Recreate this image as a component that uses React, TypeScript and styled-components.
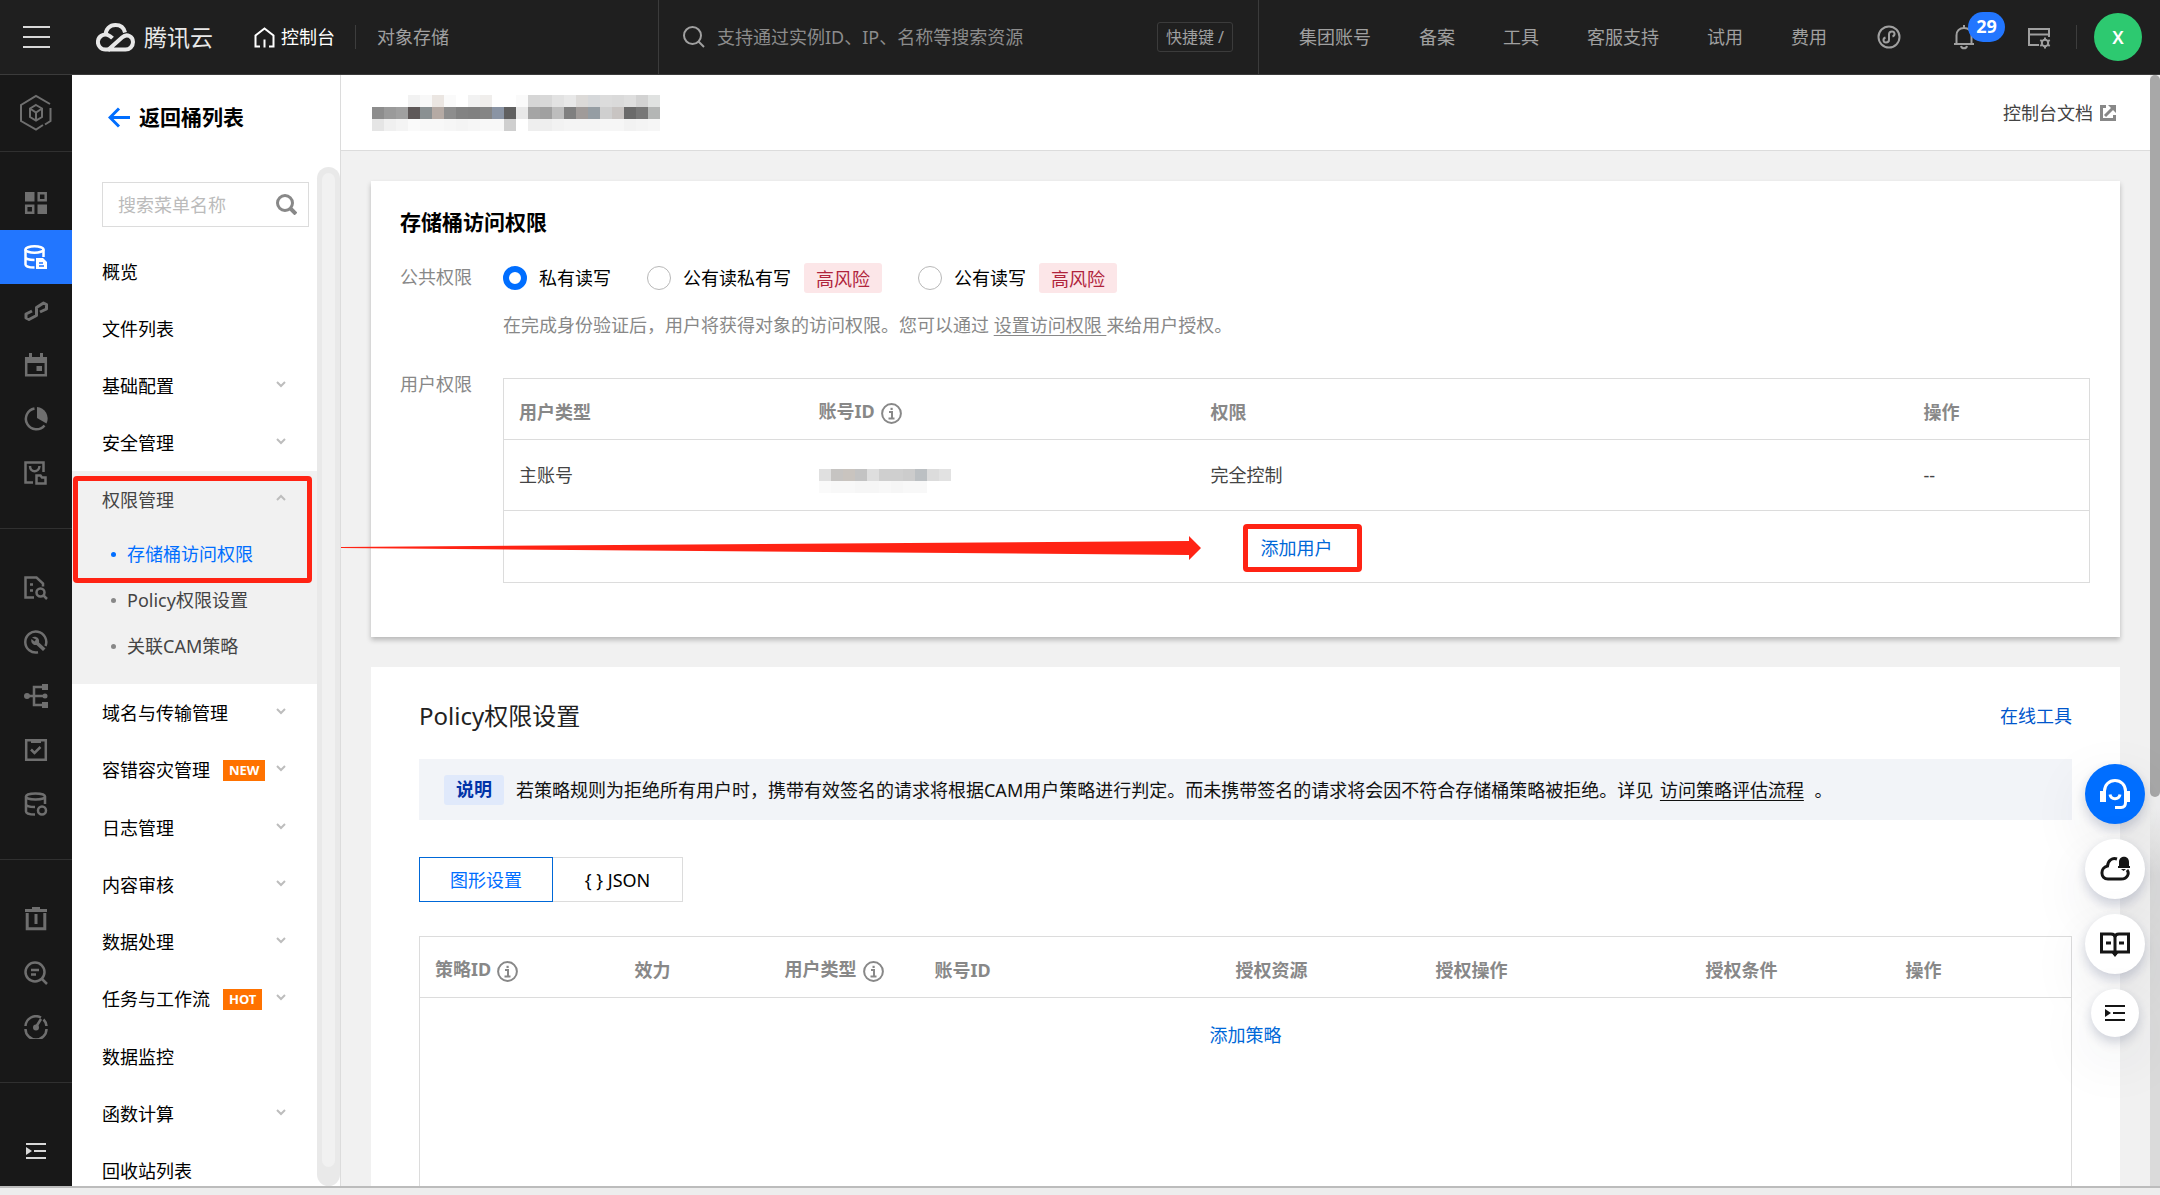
import React from "react";
import styled, { createGlobalStyle, css } from "styled-components";

const GlobalStyle = createGlobalStyle`
  * { box-sizing: border-box; }
  html, body { margin: 0; padding: 0; }
  body {
    font-family: "Noto Sans", "Noto Sans CJK SC", sans-serif;
    font-size: 18px;
    line-height: 28px;
    color: #000;
    background: #f1f1f1;
    overflow: hidden;
  }
  button, input { font: inherit; color: inherit; }
  button { border: 0; padding: 0; background: none; cursor: pointer; }
  a { color: inherit; text-decoration: none; }
  ul { list-style: none; margin: 0; padding: 0; }
  h1, h2, p { margin: 0; }
  svg { display: block; flex: none; }
`;

const Page = styled.div`
  display: flex;
  flex-direction: column;
  height: 100vh;
`;

/* ---------- top bar ---------- */
const TopBar = styled.header`
  display: flex;
  flex: none;
  height: 75px;
  background: #1f1f1f;
  border-bottom: 1px solid #3b3b3b;
  color: #a0a0a0;
`;

const TopLeft = styled.div`
  display: flex;
  align-items: center;
  flex: none;
  width: 658px;
  padding-left: 23px;
`;

const Brand = styled.a`
  display: flex;
  align-items: center;
  gap: 9px;
  margin: 0 41px 0 46px;
  font-size: 23px;
  color: #e8e8e8;
`;

const ConsoleLink = styled.a`
  display: flex;
  align-items: center;
  gap: 6px;
  color: #fff;
`;

const Divider = styled.span<{ $before: number; $after: number }>`
  width: 1px;
  height: 24px;
  margin: 0 ${(p) => p.$after}px 0 ${(p) => p.$before}px;
  background: #3d3d3d;
`;

const SearchBar = styled.div`
  display: flex;
  align-items: center;
  flex: none;
  width: 601px;
  padding: 0 25px 0 24px;
  gap: 12px;
  border: solid #3b3b3b;
  border-width: 0 1px;
`;

const SearchInput = styled.input`
  flex: 1;
  min-width: 0;
  border: 0;
  outline: 0;
  padding: 0;
  background: transparent;
  &::placeholder { color: #8c8c8c; opacity: 1; }
`;

const Shortcut = styled.kbd`
  height: 30px;
  padding: 0 8px;
  border: 1px solid #3b3b3b;
  border-radius: 3px;
  font-family: inherit;
  font-size: 16px;
`;

const TopNav = styled.nav`
  display: flex;
  flex: 1;
  align-items: center;
  justify-content: flex-end;
  gap: 48px;
  padding-right: 18px;
`;

const NavTools = styled.div`
  display: flex;
  align-items: center;
  margin-left: 2px;
`;

const BellButton = styled.button`
  position: relative;
  margin: 0 52px;
`;

const Badge = styled.span`
  position: absolute;
  left: 15px;
  bottom: 8px;
  width: 37px;
  height: 30px;
  border-radius: 15px;
  background: #2276ff;
  color: #fff;
  font-size: 18px;
  font-weight: 700;
  text-align: center;
`;

const Avatar = styled.button`
  width: 48px;
  height: 48px;
  border-radius: 50%;
  background: #2dc970;
  color: #fff;
  font-weight: 600;
`;

/* ---------- frame ---------- */
const Frame = styled.div`
  display: flex;
  flex: 1;
  min-height: 0;
`;

const BottomEdge = styled.div`
  flex: none;
  height: 9px;
  border-top: 2px solid #bcbcbc;
  background: #ededed;
`;

/* ---------- icon rail ---------- */
const Rail = styled.nav`
  display: flex;
  flex-direction: column;
  flex: none;
  width: 72px;
  background: #181818;
  color: #6f6f6f;
`;

const RailLogo = styled.button`
  display: grid;
  place-items: center;
  height: 77px;
  padding-bottom: 1px;
  margin-bottom: 24px;
  border-bottom: 1px solid #303030;
  color: inherit;
`;

const RailGroup = styled.div`
  display: flex;
  flex-direction: column;
  padding-bottom: 28px;
  margin-bottom: 32px;
  border-bottom: 1px solid #303030;
  &:nth-last-child(2) { margin-bottom: 0; }
`;

const RailButton = styled.button<{ $active?: boolean }>`
  display: grid;
  place-items: center;
  height: 54px;
  color: ${(p) => (p.$active ? "#fff" : "inherit")};
  background: ${(p) => (p.$active ? "#2276ff" : "transparent")};
`;

const RailToggle = styled.button`
  display: grid;
  place-items: center;
  height: 70px;
  margin-top: auto;
  color: #d8d8d8;
`;

/* ---------- sidebar ---------- */
const Sidebar = styled.aside`
  display: flex;
  flex-direction: column;
  flex: none;
  width: 269px;
  background: #fff;
  border-right: 1px solid #dcdcdc;
`;

const BackLink = styled.a`
  display: flex;
  align-items: center;
  gap: 9px;
  flex: none;
  height: 84px;
  margin-bottom: 8px;
  padding-left: 36px;
  font-size: 21px;
  font-weight: 700;
`;

const SideBody = styled.div`
  display: flex;
  flex: 1;
  min-height: 0;
`;

const MenuColumn = styled.div`
  flex: 1;
  min-width: 0;
  padding-top: 15px;
  overflow: hidden;
`;

const MenuSearch = styled.label`
  display: flex;
  align-items: center;
  height: 45px;
  margin: 0 8px 16px 30px;
  padding: 0 11px 0 15px;
  border: 1px solid #dcdcdc;
  color: #888;
  input {
    flex: 1;
    min-width: 0;
    border: 0;
    outline: 0;
    padding: 0;
    background: transparent;
  }
  input::placeholder { color: #bbb; opacity: 1; }
`;

const MenuRow = styled.button<{ $tagged?: boolean; $open?: boolean }>`
  display: flex;
  align-items: center;
  width: 100%;
  height: ${(p) => (p.$tagged ? 58 : 57)}px;
  padding: 0 31px 0 30px;
  color: ${(p) => (p.$open ? "#444" : "#000")};
  text-align: left;
  svg { margin-left: auto; }
`;

const MenuTag = styled.span`
  height: 21px;
  margin-left: 13px;
  padding: 0 6px;
  background: #ff7200;
  color: #fff;
  font-size: 13px;
  line-height: 21px;
  font-weight: 700;
`;

const OpenGroup = styled.div`
  position: relative;
  padding-bottom: 15px;
  background: #f1f1f1;
`;

const SubList = styled.ul`
  padding-top: 3px;
`;

const SubLink = styled.a<{ $active?: boolean }>`
  display: flex;
  align-items: center;
  gap: 11px;
  height: 46px;
  padding-left: 39px;
  color: ${(p) => (p.$active ? "#006eff" : "#444")};
  &::before {
    content: "";
    width: 5px;
    height: 5px;
    border-radius: 50%;
    background: ${(p) => (p.$active ? "#006eff" : "#888")};
  }
`;

const SideTrack = styled.div`
  flex: none;
  width: 23px;
  padding: 6px 5px 19px;
  border-radius: 12px;
  background: #e9e9e9;
`;

const SideThumb = styled.div`
  height: 100%;
  border-radius: 7px;
  background: #f1f1f1;
`;

const markBox = css`
  content: "";
  position: absolute;
  border: 5px solid #ff2314;
  border-radius: 4px;
  pointer-events: none;
`;

const GroupMark = styled.span`
  ${markBox}
  inset: 5px 5px auto 1px;
  height: 107px;
`;

/* ---------- main ---------- */
const Main = styled.main`
  flex: 1;
  min-width: 0;
  overflow: hidden;
`;

const MainHead = styled.div`
  display: flex;
  align-items: center;
  justify-content: space-between;
  height: 76px;
  padding: 0 34px 0 31px;
  background: #fff;
  border-bottom: 1px solid #dcdcdc;
`;

const DocLink = styled.a`
  display: flex;
  align-items: center;
  gap: 7px;
  color: #444;
  svg { color: #888; }
`;

const Cards = styled.div`
  display: flex;
  flex-direction: column;
  gap: 30px;
  padding: 30px;
`;

const AccessCard = styled.section`
  padding: 27px 30px 54px 29px;
  background: #fff;
  box-shadow: 0 3px 5px rgba(0, 0, 0, 0.24);
`;

const CardTitle = styled.h1`
  margin-bottom: 27px;
  font-size: 21px;
  line-height: 28px;
  font-weight: 700;
`;

const Field = styled.div`
  display: flex;
  & + & { margin-top: 31px; }
`;

const FieldLabel = styled.div`
  flex: none;
  width: 103px;
  color: #888;
`;

const FieldBody = styled.div`
  flex: 1;
  min-width: 0;
`;

const RadioRow = styled.div`
  display: flex;
  align-items: center;
  gap: 36px;
  height: 30px;
  margin-bottom: 18px;
`;

const RadioOption = styled.label`
  display: flex;
  align-items: center;
  gap: 12px;
`;

const Radio = styled.input`
  appearance: none;
  width: 24px;
  height: 24px;
  margin: 0;
  border: 1px solid #b8b8b8;
  border-radius: 50%;
  background: #fff;
  &:checked { border: 6px solid #006eff; }
`;

const RiskTag = styled.span`
  height: 30px;
  margin-left: 1px;
  padding: 2px 12px 0;
  border-radius: 3px;
  background: #fce6e8;
  color: #b0243c;
`;

const Hint = styled.p`
  color: #888;
  a { text-decoration: underline; text-underline-offset: 3px; }
`;

const Table = styled.table`
  width: 100%;
  table-layout: fixed;
  border-collapse: collapse;
  border: 1px solid #dcdcdc;
  tr { border-bottom: 1px solid #dcdcdc; }
  th, td { padding: 0 15px; text-align: left; }
  th {
    height: 61px;
    padding-top: 6px;
    line-height: 20px;
    font-weight: 700;
    color: #888;
  }
  td { height: 71px; color: #444; }
`;

const AccessTable = styled(Table)`
  margin-top: 8px;
`;

const Col = styled.col<{ $w?: number }>`
  width: ${(p) => (p.$w ? `${p.$w}px` : "auto")};
`;

const HeadIcon = styled.svg`
  display: inline-block;
  margin-left: 6px;
  vertical-align: -6px;
`;

const AddCell = styled.td<{ $tall?: boolean }>`
  && {
    height: ${(p) => (p.$tall ? 300 : 72)}px;
    padding-top: ${(p) => (p.$tall ? 23 : 2)}px;
    vertical-align: ${(p) => (p.$tall ? "top" : "middle")};
    text-align: center;
    color: #0068d8;
  }
`;

const AddUser = styled.span`
  position: relative;
  display: inline-block;
  &::after {
    ${markBox}
    inset: -10px -29px -10px -18px;
  }
`;

const Arrow = styled.svg`
  position: absolute;
  right: calc(100% + 60px);
  top: 2px;
`;

const PolicyCard = styled.section`
  padding: 33px 48px 48px;
  background: #fff;
`;

const PolicyHead = styled.div`
  display: flex;
  align-items: center;
  justify-content: space-between;
  margin-bottom: 27px;
  a { color: #0056cc; }
`;

const PolicyTitle = styled.h2`
  font-size: 24px;
  line-height: 32px;
  font-weight: 400;
  color: #222;
`;

const Notice = styled.div`
  display: flex;
  align-items: center;
  gap: 12px;
  height: 61px;
  margin-bottom: 37px;
  padding-left: 25px;
  background: #f2f4f8;
  color: #111;
  a { text-decoration: underline; text-underline-offset: 3px; margin: 0 6px 0 2px; }
`;

const NoticeTag = styled.strong`
  flex: none;
  height: 30px;
  padding: 0 12px;
  border-radius: 3px;
  background: #e0e9fb;
  color: #0033a8;
`;

const Segments = styled.div`
  display: flex;
  margin-bottom: 34px;
`;

const Segment = styled.button<{ $active?: boolean }>`
  min-width: 130px;
  height: 45px;
  padding: 0 30px;
  border: 1px solid ${(p) => (p.$active ? "#0068d8" : "#dcdcdc")};
  border-left-width: ${(p) => (p.$active ? 1 : 0)}px;
  color: ${(p) => (p.$active ? "#006eff" : "#000")};
`;

/* ---------- page scrollbar and floating tools ---------- */
const PageTrack = styled.div`
  flex: none;
  width: 10px;
  background: linear-gradient(#f0f0f0 66%, #dadada 72%);
`;

const PageThumb = styled.div`
  height: 65%;
  border-radius: 5px;
  background: #a8a8a8;
`;

const FloatTools = styled.div`
  position: fixed;
  right: 15px;
  bottom: 158px;
  display: flex;
  flex-direction: column;
  align-items: center;
  gap: 15px;
`;

const FloatButton = styled.button<{ $primary?: boolean; $small?: boolean }>`
  display: grid;
  place-items: center;
  width: ${(p) => (p.$small ? 48 : 60)}px;
  height: ${(p) => (p.$small ? 48 : 60)}px;
  border-radius: 50%;
  background: ${(p) => (p.$primary ? "#006eff" : "#fff")};
  color: ${(p) => (p.$primary ? "#fff" : "#151515")};
  box-shadow: 0 5px 12px rgba(30, 45, 90, 0.2), 0 20px 60px rgba(30, 45, 70, 0.1);
`;

/* ---------- icons ---------- */
type IconProps = { w?: number; h?: number; sw?: number; children: React.ReactNode };

const Icon = ({ w = 24, h = 24, sw = 2.5, children }: IconProps) => (
  <svg
    width={w}
    height={h}
    viewBox={`0 0 ${w} ${h}`}
    fill="none"
    stroke="currentColor"
    strokeWidth={sw}
    aria-hidden="true"
  >
    {children}
  </svg>
);

const solid = { fill: "currentColor", stroke: "none" };

const CollapseIcon = () => (
  <Icon w={20} h={18} sw={2}>
    <path d="M0 2h20M8 9h12M0 16h20" />
    <path d="M0 5l6 4-6 4z" {...solid} />
  </Icon>
);

const InfoIcon = () => (
  <HeadIcon width="21" height="21" viewBox="0 0 21 21" fill="none" stroke="#888" strokeWidth="2" aria-hidden="true">
    <circle cx="10.500" cy="10.500" r="9.400" />
    <path d="M8 9h3v6M7.500 15.500h6" />
    <path d="M9.500 4.800h2.200v2.200h-2.200z" fill="#888" stroke="none" />
  </HeadIcon>
);

const Chevron = ({ up }: { up?: boolean }) => (
  <Icon w={10} h={12} sw={2}>
    <path d={up ? "M1 6l4-4 4 4" : "M1 2l4 4 4-4"} stroke="#bdbdbd" />
  </Icon>
);

const railGroups: { name: string; art: React.ReactNode }[][] = [
  [
    {
      name: "总览",
      art: (
        <>
          <path d="M1 1h9.500v9.500H1zM13.500 13.500H23V23h-9.500z" {...solid} />
          <path d="M14.700 2.200h7v7h-7zM2.200 14.700h7v7h-7z" />
        </>
      ),
    },
    {
      name: "对象存储",
      art: (
        <>
          <ellipse cx="10.500" cy="4.500" rx="9" ry="3.200" />
          <path d="M1.500 4.500v15c0 1.500 3 3 9 3M19.500 4.500V12M1.500 12c0 1.700 3.500 3 9 3" />
          <path d="M12 13h7l4 4v7H12z" {...solid} />
          <path d="M15 18h4M15 21h5" stroke="#2276ff" strokeWidth="1.500" />
        </>
      ),
    },
    { name: "数据流", art: <path d="M8 12L2 15v4l3 1.500 7.500-4v-8l7-4.500 3 1.500v4.500L16 13" strokeWidth="3" strokeLinejoin="round" /> },
    {
      name: "日程",
      art: (
        <>
          <path d="M2.200 5.200h19.600v17H2.200z" />
          <path d="M1 4h22v6H1zM5 0h3v5H5zM16 0h3v5h-3zM12.500 13H18v5h-5.500z" {...solid} />
        </>
      ),
    },
    {
      name: "统计",
      art: (
        <>
          <path d="M10.500 1.500A10.500 10.500 0 1 0 20.500 18.500" />
          <path d="M13 0a11.500 11.500 0 0 1 9.500 16.500L13 11z" {...solid} />
        </>
      ),
    },
    {
      name: "归档",
      art: (
        <>
          <path d="M9 21.500H1.500v-20h18V11M6 5c0 7 9 7 9.500 0" />
          <path d="M12.500 14.500h4l1.500 2h3.500v6h-9z" />
        </>
      ),
    },
  ],
  [
    {
      name: "日志检索",
      art: (
        <>
          <path d="M10 21.500H1.500v-20h11l6.500 6v3" />
          <circle cx="16.500" cy="16.500" r="4" />
          <path d="M19.500 19.500l3.500 3.500M6 8.500h3M6 14.500h3" />
        </>
      ),
    },
    {
      name: "工具",
      art: (
        <>
          <path d="M14 22.300A10.500 10.500 0 1 1 21.500 16" />
          <path d="M8 7.500c3-2 8 0 7 5l6.500 6-2.500 2.500-6.500-6c-4 .5-6-3-5-6l3 2.500 1.500-2z" {...solid} />
        </>
      ),
    },
    {
      name: "拓扑",
      art: (
        <>
          <path d="M2 12h18M18 3h-8v18h8" />
          <path d="M18 0h6v6h-6zM18 18h6v6h-6z" {...solid} />
          <circle cx="3" cy="12" r="3" {...solid} />
          <circle cx="21" cy="12" r="2.500" {...solid} />
        </>
      ),
    },
    {
      name: "任务",
      art: (
        <>
          <path d="M2.200 2.200h19.600v19.600H2.200zM7 11.500l3.500 3.500 6-6" />
          <path d="M7 1h10v4H7z" {...solid} />
        </>
      ),
    },
    {
      name: "数据库",
      art: (
        <>
          <ellipse cx="11.500" cy="4.500" rx="9.500" ry="3" />
          <path d="M2 4.500v15c0 1.500 3 3 9 3M21 4.500V12M2 12c0 1.700 3 3 9 3" />
          <circle cx="18" cy="18.500" r="4" />
        </>
      ),
    },
  ],
  [
    { name: "回收站", art: <path d="M1 3.500h22M8 1.500h8M3.200 6v15.700h17.600V6M12 7v10" strokeWidth="3" /> },
    {
      name: "检索",
      art: (
        <>
          <circle cx="11" cy="11" r="9.500" />
          <path d="M18 18l5 5M7 9h8M7 13.500h5" />
        </>
      ),
    },
    {
      name: "性能",
      art: (
        <>
          <path d="M17 2.500A10.500 10.500 0 0 0 1.500 11M1.500 14a10.500 10.500 0 0 0 21 0M22.500 11a10 10 0 0 0-3-6.500M12 12l5-8" />
          <circle cx="12" cy="12.500" r="3" {...solid} />
        </>
      ),
    },
  ],
];

/* ---------- blurred-out values ---------- */
const titleTiles = [
  "|||#f2f2f2|#f8f8f8|#ebe6e2|#fafafa||#f2f2f2|#f0eeec|||#fafafa|#d6d6d6|#d8d8d8|#e2e2e2|#e8e8e8|#dcdad8|#d6d8da|#dcdcdc|#dadada|#dedede|#d2d2d2|#e0e2e1",
  "#8d8d8d|#9a9a9a|#a0a0a0|#5e5858|#8a9092|#b5aaa4|#8d8d8d|#828282|#808080|#858585|#8a94a4|#606060|#e8e8e8|#a5a5a5|#a0a0a0|#bdbdbd|#7f7f7f|#a09b99|#959da3|#cfcfcf|#c8c4c2|#6a6a6a|#777777|#b4b6b5",
  "#e5e5e5|#f0f0f0|#f4f4f4|#fafafa|#f8f8f8|#f8f8f8|#f6f6f6|#f4f4f4|#f6f6f6|#f8f8f8|#f8f8f8|#cfcfcf||#eeeeee|#eeeeee|#f2f2f2|#f4f4f4|#f4f4f4|#f4f4f4|#f6f6f6|#f6f6f6|#f2f2f2|#f4f4f4|#f6f6f6",
];
const idTiles = [
  "||||||||||",
  "#e0e0e0|#c6c4c2|#c9c4bf|#c3c3c3|#dedede|#cfcfcf|#cfcfcf|#cccccc|#bcc0c3|#dcdcdc|#e2e2e2",
  "#fafafa|#f8f8f8|#f8f8f8|#f6f6f6|#f6f6f6|#f8f8f8|#f6f6f6|#f8f8f8|#f8f8f8||",
];

const Mosaic = ({ rows, label }: { rows: string[]; label: string }) => {
  const cells = rows.map((r) => r.split("|"));
  return (
    <svg width={cells[0].length * 12} height={rows.length * 12} role="img" aria-label={label} shapeRendering="crispEdges">
      {cells.map((row, y) =>
        row.map((c, x) => (c ? <rect key={`${x}-${y}`} x={x * 12} y={y * 12} width="12" height="12" fill={c} /> : null)),
      )}
    </svg>
  );
};

/* ---------- data ---------- */
type MenuItem = { label: string; tag?: string; leaf?: boolean };

const menuTop: MenuItem[] = [
  { label: "概览", leaf: true },
  { label: "文件列表", leaf: true },
  { label: "基础配置" },
  { label: "安全管理" },
];
const menuSub = ["存储桶访问权限", "Policy权限设置", "关联CAM策略"];
const menuBottom: MenuItem[] = [
  { label: "域名与传输管理" },
  { label: "容错容灾管理", tag: "NEW" },
  { label: "日志管理" },
  { label: "内容审核" },
  { label: "数据处理" },
  { label: "任务与工作流", tag: "HOT" },
  { label: "数据监控", leaf: true },
  { label: "函数计算" },
  { label: "回收站列表", leaf: true },
];
const navLinks = ["集团账号", "备案", "工具", "客服支持", "试用", "费用"];
const radios = [
  { label: "私有读写", risk: false },
  { label: "公有读私有写", risk: true },
  { label: "公有读写", risk: true },
];
const policyCols: { label: string; w?: number; info?: boolean }[] = [
  { label: "策略ID", w: 200, info: true },
  { label: "效力", w: 150 },
  { label: "用户类型", w: 150, info: true },
  { label: "账号ID" },
  { label: "授权资源", w: 200 },
  { label: "授权操作", w: 270 },
  { label: "授权条件", w: 200 },
  { label: "操作", w: 181 },
];

const MenuItems = ({ items }: { items: MenuItem[] }) => (
  <>
    {items.map((m) => (
      <MenuRow key={m.label} $tagged={!!m.tag}>
        {m.label}
        {m.tag && <MenuTag>{m.tag}</MenuTag>}
        {!m.leaf && <Chevron />}
      </MenuRow>
    ))}
  </>
);

const Top = () => (
  <TopBar>
    <TopLeft>
      <button aria-label="菜单">
        <Icon w={27} h={22} sw={2}>
          <path d="M0 1h27M0 11h27M0 21h27" stroke="#d8d8d8" />
        </Icon>
      </button>
      <Brand href="#">
        <Icon w={39} h={29} sw={4}>
          <path d="M14 26.500H9.500a7.500 7.500 0 1 1 2-14.700c1.800.6 3.300 1.700 5 3.400" />
          <path d="M10 12.500C9 6 14 2 19.500 2c5 0 8.500 3 9.500 7.500" />
          <path d="M12 27L26 14.500c5-4.500 11-1 11 4.500 0 4.500-3.500 7.500-7.500 7.500H12.500" />
        </Icon>
        腾讯云
      </Brand>
      <ConsoleLink href="#">
        <Icon w={21} h={21} sw={2}>
          <path d="M6 19.500H1.500V8.500l9-7 9 7v11H15M10.500 12.500v8" />
        </Icon>
        控制台
      </ConsoleLink>
      <Divider $before={20} $after={21} />
      <a href="#">对象存储</a>
    </TopLeft>
    <SearchBar>
      <Icon w={22} h={22} sw={2}>
        <circle cx="9.500" cy="9.500" r="8.500" />
        <path d="M15.500 15.500l5.500 5.500" />
      </Icon>
      <SearchInput aria-label="搜索资源" placeholder="支持通过实例ID、IP、名称等搜索资源" />
      <Shortcut>快捷键 /</Shortcut>
    </SearchBar>
    <TopNav>
      {navLinks.map((n) => (
        <a href="#" key={n}>
          {n}
        </a>
      ))}
      <NavTools>
        <button aria-label="小程序">
          <Icon sw={2}>
            <circle cx="12" cy="12" r="10.500" />
            <path d="M8.500 12.500c-3 1-2.500 5 .5 5 1.500 0 3-1 3-2.800V9.300c0-1.800 1.500-2.800 3-2.800 3 0 3.500 4 .5 5" />
          </Icon>
        </button>
        <BellButton aria-label="消息">
          <Icon w={22} h={26} sw={2}>
            <path d="M11 1v3M1 20h20M3.500 20v-8.500C3.500 7 6.500 4 11 4s7.500 3 7.500 7.500V20M8 22c.5 3 5.500 3 6 0" />
          </Icon>
          <Badge>29</Badge>
        </BellButton>
        <button aria-label="设置">
          <Icon w={24} h={24} sw={2}>
            <path d="M12 20H2V4h20v8M2 9.500h20" />
            <circle cx="18" cy="18" r="3.200" />
            <path d="M18 12.500v2M18 21.500v2M13.200 15.200l1.800 1M21 19.800l1.800 1M13.200 20.800l1.800-1M21 16.200l1.800-1" />
          </Icon>
        </button>
        <Divider $before={25} $after={17} />
        <Avatar>X</Avatar>
      </NavTools>
    </TopNav>
  </TopBar>
);

const IconRail = () => (
  <Rail>
    <RailLogo aria-label="产品">
      <Icon w={34} h={38} sw={2}>
        <path d="M24 31l-7 4.500L2 27V11L17 2l14 8M31.500 14v13L26 30.500M17 11l6 3.500v8.500l-6 3.500-6-3.500v-8.500zM11 14.500l6 4 6-4M17 18.500v8" />
      </Icon>
    </RailLogo>
    {railGroups.map((g, i) => (
      <RailGroup key={i}>
        {g.map((it) => (
          <RailButton key={it.name} aria-label={it.name} $active={it.name === "对象存储"}>
            <Icon>{it.art}</Icon>
          </RailButton>
        ))}
      </RailGroup>
    ))}
    <RailToggle aria-label="展开">
      <CollapseIcon />
    </RailToggle>
  </Rail>
);

const SideMenu = () => (
  <Sidebar>
    <BackLink href="#">
      <Icon w={22} h={21} sw={3}>
        <path d="M22 10.500H3M11 1.500l-9 9 9 9" stroke="#006eff" />
      </Icon>
      返回桶列表
    </BackLink>
    <SideBody>
      <MenuColumn>
        <MenuSearch>
          <input aria-label="搜索菜单" placeholder="搜索菜单名称" />
          <Icon w={21} h={21} sw={3}>
            <circle cx="9" cy="9" r="7.500" />
            <path d="M14 14l6 6" strokeWidth="4" />
          </Icon>
        </MenuSearch>
        <MenuItems items={menuTop} />
        <OpenGroup>
          <MenuRow $open>
            权限管理
            <Chevron up />
          </MenuRow>
          <SubList>
            {menuSub.map((s, i) => (
              <li key={s}>
                <SubLink href="#" $active={i === 0}>
                  {s}
                </SubLink>
              </li>
            ))}
          </SubList>
          <GroupMark />
        </OpenGroup>
        <MenuItems items={menuBottom} />
      </MenuColumn>
      <SideTrack>
        <SideThumb />
      </SideTrack>
    </SideBody>
  </Sidebar>
);

const Access = () => (
  <AccessCard>
    <CardTitle>存储桶访问权限</CardTitle>
    <Field>
      <FieldLabel>公共权限</FieldLabel>
      <FieldBody>
        <RadioRow role="radiogroup" aria-label="公共权限">
          {radios.map((r, i) => (
            <RadioOption key={r.label}>
              <Radio type="radio" name="acl" defaultChecked={i === 0} />
              {r.label}
              {r.risk && <RiskTag>高风险</RiskTag>}
            </RadioOption>
          ))}
        </RadioRow>
        <Hint>
          在完成身份验证后，用户将获得对象的访问权限。您可以通过 <a href="#">设置访问权限 </a>来给用户授权。
        </Hint>
      </FieldBody>
    </Field>
    <Field>
      <FieldLabel>用户权限</FieldLabel>
      <FieldBody>
        <AccessTable>
          <colgroup>
            <Col $w={300} />
            <Col $w={392} />
            <Col />
            <Col $w={181} />
          </colgroup>
          <thead>
            <tr>
              <th>用户类型</th>
              <th>
                账号ID
                <InfoIcon />
              </th>
              <th>权限</th>
              <th>操作</th>
            </tr>
          </thead>
          <tbody>
            <tr>
              <td>主账号</td>
              <td>
                <Mosaic rows={idTiles} label="账号" />
              </td>
              <td>完全控制</td>
              <td>--</td>
            </tr>
            <tr>
              <AddCell colSpan={4}>
                <AddUser>
                  <a href="#">添加用户</a>
                  <Arrow width="860" height="24" viewBox="0 0 860 24" aria-hidden="true">
                    <path d="M0 11L848 5V0l12 12-12 12v-5L0 12z" fill="#ff2314" />
                  </Arrow>
                </AddUser>
              </AddCell>
            </tr>
          </tbody>
        </AccessTable>
      </FieldBody>
    </Field>
  </AccessCard>
);

const Policy = () => (
  <PolicyCard>
    <PolicyHead>
      <PolicyTitle>Policy权限设置</PolicyTitle>
      <a href="#">在线工具</a>
    </PolicyHead>
    <Notice>
      <NoticeTag>说明</NoticeTag>
      <p>
        若策略规则为拒绝所有用户时，携带有效签名的请求将根据CAM用户策略进行判定。而未携带签名的请求将会因不符合存储桶策略被拒绝。详见{" "}
        <a href="#">访问策略评估流程</a> 。
      </p>
    </Notice>
    <Segments>
      <Segment $active>图形设置</Segment>
      <Segment>{"{ } JSON"}</Segment>
    </Segments>
    <Table>
      <colgroup>
        {policyCols.map((c) => (
          <Col key={c.label} $w={c.w} />
        ))}
      </colgroup>
      <thead>
        <tr>
          {policyCols.map((c) => (
            <th key={c.label}>
              {c.label}
              {c.info && <InfoIcon />}
            </th>
          ))}
        </tr>
      </thead>
      <tbody>
        <tr>
          <AddCell colSpan={8} $tall>
            <a href="#">添加策略</a>
          </AddCell>
        </tr>
      </tbody>
    </Table>
  </PolicyCard>
);

export default function App() {
  return (
    <Page>
      <GlobalStyle />
      <Top />
      <Frame>
        <IconRail />
        <SideMenu />
        <Main>
          <MainHead>
            <Mosaic rows={titleTiles} label="存储桶" />
            <DocLink href="#">
              控制台文档
              <Icon w={16} h={16} sw={3}>
                <path d="M6 1.500H1.500v13h13V10M5 11l8-8" />
                <path d="M8 0h8v8z" {...solid} />
              </Icon>
            </DocLink>
          </MainHead>
          <Cards>
            <Access />
            <Policy />
          </Cards>
        </Main>
        <PageTrack>
          <PageThumb />
        </PageTrack>
      </Frame>
      <BottomEdge />
      <FloatTools>
        <FloatButton $primary aria-label="客服">
          <Icon w={30} h={30} sw={3}>
            <path d="M4.500 14v-2c0-6 4.500-10.500 10.500-10.500S25.500 6 25.500 12v11.500c0 3-1.500 5-4.500 5h-6M10 15.500c1 5.500 9 5.500 10 0" />
            <path d="M0 12h6v11H0zM24 12h6v11h-6z" {...solid} />
          </Icon>
        </FloatButton>
        <FloatButton aria-label="云助手">
          <Icon w={30} h={26} sw={3}>
            <path d="M17 3c-5-1.500-9 1.500-9.500 7C0 11.500 0 23 8 23h13c7 0 8.500-6 6-9" />
            <path d="M19 10V6c0-7 10-7 10 0v4h1v2H18v-2zM21 13h5l-2.500 2z" {...solid} />
          </Icon>
        </FloatButton>
        <FloatButton aria-label="文档">
          <Icon w={30} h={26} sw={3}>
            <path d="M15 24v-3H1.500V3H11c2.500 0 4 1 4 3.500V21M15 6.500C15 4 16.500 3 19 3h9.500v18H15M6 12h5M19 12h5" />
            <path d="M11 21h8l-4 5z" {...solid} />
          </Icon>
        </FloatButton>
        <FloatButton $small aria-label="收起">
          <CollapseIcon />
        </FloatButton>
      </FloatTools>
    </Page>
  );
}
